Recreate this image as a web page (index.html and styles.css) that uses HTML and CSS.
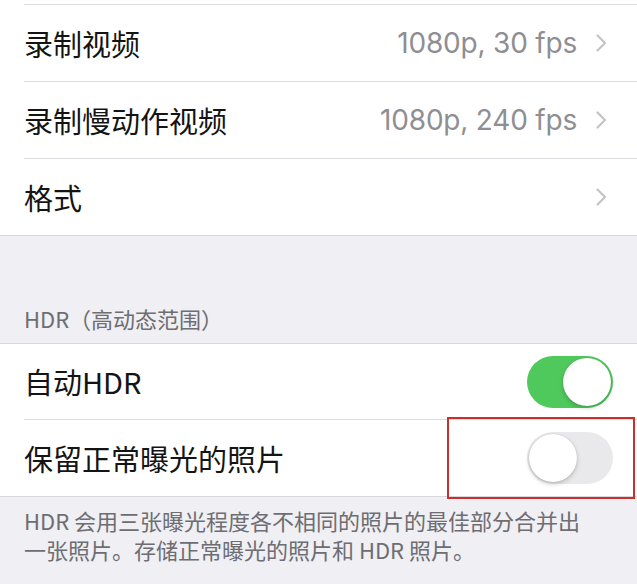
FILE: index.html
```html
<!DOCTYPE html>
<html lang="zh-CN">
<head>
<meta charset="utf-8">
<link rel="stylesheet" href="styles.css">
</head>
<body>
<div class="group">
  <div class="cell"><div class="cell-inner stub"></div></div>
  <div class="cell">
    <div class="cell-inner">
      <span class="label">录制视频</span>
      <span class="value">1080p, 30 fps</span>
      <svg class="chev" width="11" height="18" viewBox="0 0 11 18"><polyline points="1.5,1.5 9,9 1.5,16.5" fill="none" stroke="#c4c4c8" stroke-width="2.2" stroke-linecap="round" stroke-linejoin="round"/></svg>
    </div>
  </div>
  <div class="cell">
    <div class="cell-inner">
      <span class="label">录制慢动作视频</span>
      <span class="value">1080p, 240 fps</span>
      <svg class="chev" width="11" height="18" viewBox="0 0 11 18"><polyline points="1.5,1.5 9,9 1.5,16.5" fill="none" stroke="#c4c4c8" stroke-width="2.2" stroke-linecap="round" stroke-linejoin="round"/></svg>
    </div>
  </div>
  <div class="cell">
    <div class="cell-inner last">
      <span class="label">格式</span>
      <span class="value"></span>
      <svg class="chev" width="11" height="18" viewBox="0 0 11 18"><polyline points="1.5,1.5 9,9 1.5,16.5" fill="none" stroke="#c4c4c8" stroke-width="2.2" stroke-linecap="round" stroke-linejoin="round"/></svg>
    </div>
  </div>
</div>

<div class="section-header">HDR（高动态范围）</div>

<div class="group">
  <div class="cell">
    <div class="cell-inner toggle-row">
      <span class="label">自动HDR</span>
      <span class="switch on"><span class="knob"></span></span>
    </div>
  </div>
  <div class="cell highlight-wrap">
    <div class="cell-inner toggle-row last">
      <span class="label">保留正常曝光的照片</span>
      <span class="switch off"><span class="knob"></span></span>
    </div>
    <div class="highlight"></div>
  </div>
</div>

<div class="section-footer">HDR 会用三张曝光程度各不相同的照片的最佳部分合并出一张照片。存储正常曝光的照片和 HDR 照片。</div>
</body>
</html>
```

FILE: styles.css
```css
html, body {
  margin: 0;
  padding: 0;
  background: #efeff4;
  font-family: "Noto Sans CJK SC", "Noto Sans", sans-serif;
}

.group {
  background: #ffffff;
  border-bottom: 1px solid #d8d8dc;
}

.cell {
  padding-left: 24px;
}

.cell-inner {
  height: 76px;
  display: flex;
  align-items: center;
  border-bottom: 1px solid #dcdce0;
  padding-right: 30px;
}

.cell-inner.stub {
  height: 4px;
}

.cell-inner.last {
  border-bottom: none;
}

.toggle-row {
  height: 75px;
  padding-right: 24px;
}

.toggle-row.last {
  height: 76px;
}

.label {
  font-size: 29px;
  color: #141414;
  flex: 1;
  line-height: 1;
}

.value {
  font-family: "Inter", "Noto Sans", sans-serif;
  font-size: 28px;
  color: #8e8e93;
  margin-right: 19px;
  letter-spacing: -0.2px;
}

.chev {
  display: block;
}

.section-header {
  padding: 69px 24px 12px;
  font-size: 22px;
  line-height: 26px;
  color: #6d6d72;
  border-bottom: 1px solid #d8d8dc;
}

.section-footer {
  padding: 9px 40px 0 24px;
  font-size: 22px;
  line-height: 29px;
  color: #6d6d72;
}

.switch {
  position: relative;
  width: 86px;
  height: 52px;
  border-radius: 26px;
  box-sizing: border-box;
  display: block;
}

.switch.on {
  background: #4fc95b;
}

.switch.off {
  background: #e9e9eb;
}

.knob {
  position: absolute;
  top: 2px;
  width: 48px;
  height: 48px;
  border-radius: 50%;
  background: #ffffff;
  box-shadow: 0 2px 4px rgba(0, 0, 0, 0.2), 0 0 1px rgba(0, 0, 0, 0.2);
}

.switch.on .knob {
  right: 2px;
}

.switch.off .knob {
  left: 2px;
}

.highlight-wrap {
  position: relative;
}

.highlight {
  position: absolute;
  left: 447px;
  top: -3px;
  width: 184px;
  height: 78px;
  border: 2px solid #cc2f2a;
  pointer-events: none;
}
```
